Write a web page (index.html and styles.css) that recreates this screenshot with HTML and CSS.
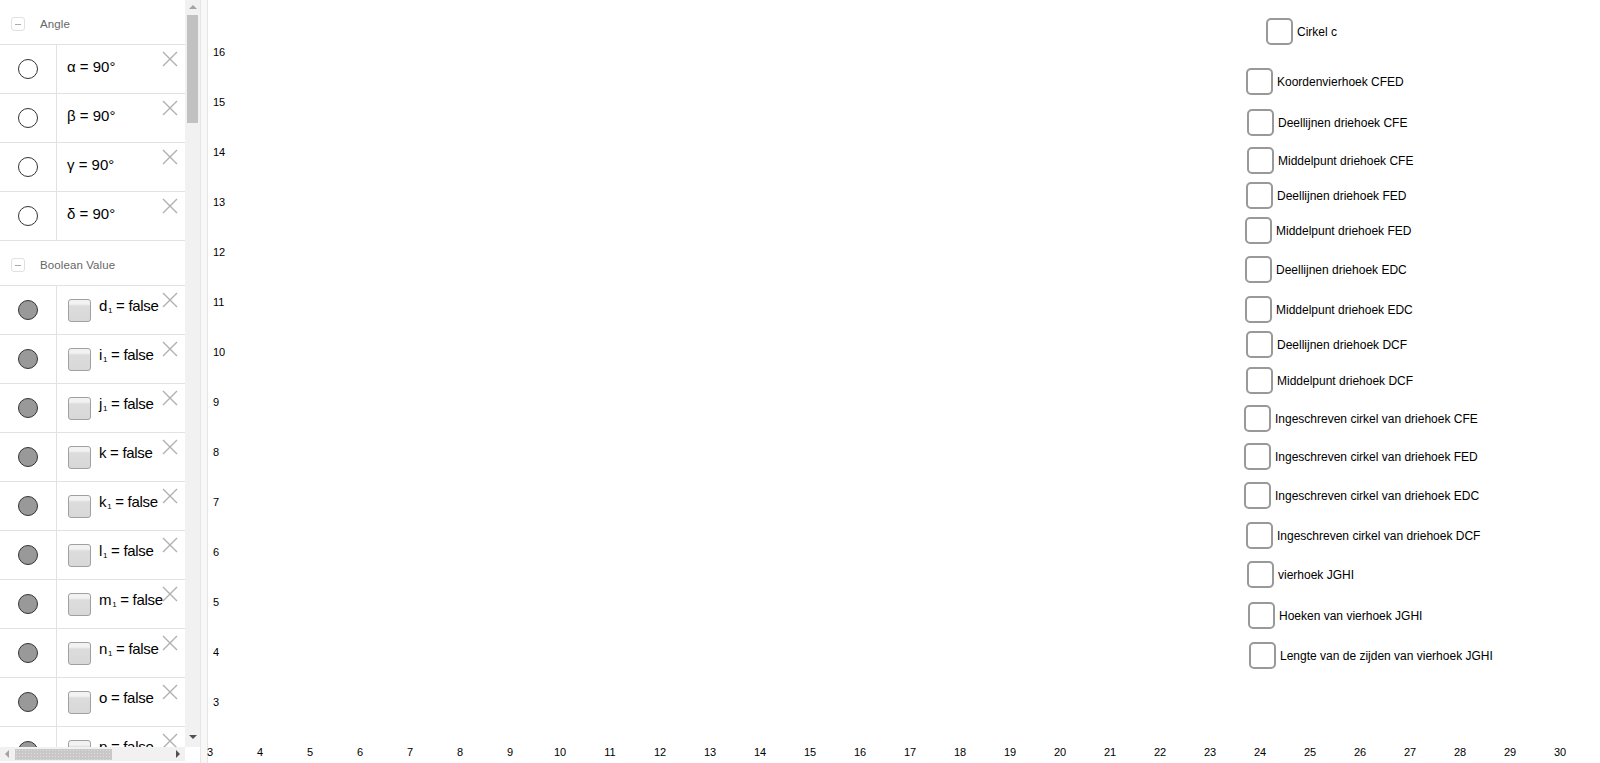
FILE: index.html
```html
<!DOCTYPE html>
<html>
<head>
<meta charset="utf-8">
<link rel="stylesheet" href="styles.css">
</head>
<body>
<div class="app">
  <div class="algebra">
    <div class="algebra-body">
      <div class="list">
        <div class="group-head"><span class="collapse"></span><span class="group-title">Angle</span></div>
        <div class="row"><div class="marker"><span class="dot"></span></div><div class="cell"><span class="expr">α = 90°</span></div><svg class="del" viewBox="0 0 16 16"><path d="M1 1L15 15M15 1L1 15"/></svg></div>
        <div class="row"><div class="marker"><span class="dot"></span></div><div class="cell"><span class="expr">β = 90°</span></div><svg class="del" viewBox="0 0 16 16"><path d="M1 1L15 15M15 1L1 15"/></svg></div>
        <div class="row"><div class="marker"><span class="dot"></span></div><div class="cell"><span class="expr">γ = 90°</span></div><svg class="del" viewBox="0 0 16 16"><path d="M1 1L15 15M15 1L1 15"/></svg></div>
        <div class="row"><div class="marker"><span class="dot"></span></div><div class="cell"><span class="expr">δ = 90°</span></div><svg class="del" viewBox="0 0 16 16"><path d="M1 1L15 15M15 1L1 15"/></svg></div>
        <div class="group-head"><span class="collapse"></span><span class="group-title">Boolean Value</span></div>
        <div class="row"><div class="marker"><span class="dot on"></span></div><div class="cell"><span class="chk"></span><span class="expr bool">d<sub>1</sub> = false</span></div><svg class="del" viewBox="0 0 16 16"><path d="M1 1L15 15M15 1L1 15"/></svg></div>
        <div class="row"><div class="marker"><span class="dot on"></span></div><div class="cell"><span class="chk"></span><span class="expr bool">i<sub>1</sub> = false</span></div><svg class="del" viewBox="0 0 16 16"><path d="M1 1L15 15M15 1L1 15"/></svg></div>
        <div class="row"><div class="marker"><span class="dot on"></span></div><div class="cell"><span class="chk"></span><span class="expr bool">j<sub>1</sub> = false</span></div><svg class="del" viewBox="0 0 16 16"><path d="M1 1L15 15M15 1L1 15"/></svg></div>
        <div class="row"><div class="marker"><span class="dot on"></span></div><div class="cell"><span class="chk"></span><span class="expr bool">k = false</span></div><svg class="del" viewBox="0 0 16 16"><path d="M1 1L15 15M15 1L1 15"/></svg></div>
        <div class="row"><div class="marker"><span class="dot on"></span></div><div class="cell"><span class="chk"></span><span class="expr bool">k<sub>1</sub> = false</span></div><svg class="del" viewBox="0 0 16 16"><path d="M1 1L15 15M15 1L1 15"/></svg></div>
        <div class="row"><div class="marker"><span class="dot on"></span></div><div class="cell"><span class="chk"></span><span class="expr bool">l<sub>1</sub> = false</span></div><svg class="del" viewBox="0 0 16 16"><path d="M1 1L15 15M15 1L1 15"/></svg></div>
        <div class="row"><div class="marker"><span class="dot on"></span></div><div class="cell"><span class="chk"></span><span class="expr bool">m<sub>1</sub> = false</span></div><svg class="del" viewBox="0 0 16 16"><path d="M1 1L15 15M15 1L1 15"/></svg></div>
        <div class="row"><div class="marker"><span class="dot on"></span></div><div class="cell"><span class="chk"></span><span class="expr bool">n<sub>1</sub> = false</span></div><svg class="del" viewBox="0 0 16 16"><path d="M1 1L15 15M15 1L1 15"/></svg></div>
        <div class="row"><div class="marker"><span class="dot on"></span></div><div class="cell"><span class="chk"></span><span class="expr bool">o = false</span></div><svg class="del" viewBox="0 0 16 16"><path d="M1 1L15 15M15 1L1 15"/></svg></div>
        <div class="row"><div class="marker"><span class="dot on"></span></div><div class="cell"><span class="chk"></span><span class="expr bool">p = false</span></div><svg class="del" viewBox="0 0 16 16"><path d="M1 1L15 15M15 1L1 15"/></svg></div>
      </div>
      <div class="vscroll">
        <span class="arrow up"></span>
        <span class="vthumb"></span>
        <span class="vspace"></span>
        <span class="arrow down"></span>
      </div>
    </div>
    <div class="hbar">
      <div class="hscroll">
        <span class="arrow left"></span>
        <span class="hthumb"></span>
        <span class="hspace"></span>
        <span class="arrow right"></span>
      </div>
      <div class="corner"></div>
    </div>
  </div>
  <div class="divider"></div>
  <div class="graphics">
    <div class="yaxis">
      <span>16</span><span>15</span><span>14</span><span>13</span><span>12</span><span>11</span><span>10</span><span>9</span><span>8</span><span>7</span><span>6</span><span>5</span><span>4</span><span>3</span>
    </div>
    <div class="xaxis">
      <span>3</span><span>4</span><span>5</span><span>6</span><span>7</span><span>8</span><span>9</span><span>10</span><span>11</span><span>12</span><span>13</span><span>14</span><span>15</span><span>16</span><span>17</span><span>18</span><span>19</span><span>20</span><span>21</span><span>22</span><span>23</span><span>24</span><span>25</span><span>26</span><span>27</span><span>28</span><span>29</span><span>30</span>
    </div>
    <label class="gcb" style="left:1058px;top:18px"><span class="gbox"></span><span class="gtext">Cirkel c</span></label>
    <label class="gcb" style="left:1038px;top:68px"><span class="gbox"></span><span class="gtext">Koordenvierhoek CFED</span></label>
    <label class="gcb" style="left:1039px;top:109px"><span class="gbox"></span><span class="gtext">Deellijnen driehoek CFE</span></label>
    <label class="gcb" style="left:1039px;top:147px"><span class="gbox"></span><span class="gtext">Middelpunt driehoek CFE</span></label>
    <label class="gcb" style="left:1038px;top:182px"><span class="gbox"></span><span class="gtext">Deellijnen driehoek FED</span></label>
    <label class="gcb" style="left:1037px;top:217px"><span class="gbox"></span><span class="gtext">Middelpunt driehoek FED</span></label>
    <label class="gcb" style="left:1037px;top:256px"><span class="gbox"></span><span class="gtext">Deellijnen driehoek EDC</span></label>
    <label class="gcb" style="left:1037px;top:296px"><span class="gbox"></span><span class="gtext">Middelpunt driehoek EDC</span></label>
    <label class="gcb" style="left:1038px;top:331px"><span class="gbox"></span><span class="gtext">Deellijnen driehoek DCF</span></label>
    <label class="gcb" style="left:1038px;top:367px"><span class="gbox"></span><span class="gtext">Middelpunt driehoek DCF</span></label>
    <label class="gcb" style="left:1036px;top:405px"><span class="gbox"></span><span class="gtext">Ingeschreven cirkel van driehoek CFE</span></label>
    <label class="gcb" style="left:1036px;top:443px"><span class="gbox"></span><span class="gtext">Ingeschreven cirkel van driehoek FED</span></label>
    <label class="gcb" style="left:1036px;top:482px"><span class="gbox"></span><span class="gtext">Ingeschreven cirkel van driehoek EDC</span></label>
    <label class="gcb" style="left:1038px;top:522px"><span class="gbox"></span><span class="gtext">Ingeschreven cirkel van driehoek DCF</span></label>
    <label class="gcb" style="left:1039px;top:561px"><span class="gbox"></span><span class="gtext">vierhoek JGHI</span></label>
    <label class="gcb" style="left:1040px;top:602px"><span class="gbox"></span><span class="gtext">Hoeken van vierhoek JGHI</span></label>
    <label class="gcb" style="left:1041px;top:642px"><span class="gbox"></span><span class="gtext">Lengte van de zijden van vierhoek JGHI</span></label>
  </div>
</div>
</body>
</html>
```
FILE: styles.css
```css
html, body {
  margin: 0;
  padding: 0;
  background: #fff;
}
body {
  width: 1600px;
  height: 763px;
  overflow: hidden;
  font-family: "Liberation Sans", Arial, sans-serif;
}
.app {
  display: flex;
  height: 763px;
}
.algebra {
  width: 200px;
  flex: none;
  display: flex;
  flex-direction: column;
}
.algebra-body {
  display: flex;
  height: 747px;
}
.list {
  width: 185px;
  overflow: hidden;
  flex: none;
}
.group-head {
  height: 45px;
  box-sizing: border-box;
  border-bottom: 1px solid #e2e2e2;
  display: flex;
  align-items: center;
  padding-left: 11px;
  padding-top: 4px;
}
.collapse {
  width: 14px;
  height: 14px;
  box-sizing: border-box;
  border: 1px solid #e0e0e0;
  border-radius: 3px;
  position: relative;
  margin-right: 15px;
}
.collapse::after {
  content: "";
  position: absolute;
  left: 3px;
  right: 3px;
  top: 6px;
  height: 1px;
  background: #aaa;
}
.group-title {
  font-size: 11.5px;
  color: #666;
  letter-spacing: 0.1px;
}
.row {
  height: 49px;
  box-sizing: border-box;
  border-bottom: 1px solid #e2e2e2;
  display: flex;
  position: relative;
}
.marker {
  width: 57px;
  flex: none;
  box-sizing: border-box;
  border-right: 1px solid #e2e2e2;
  display: flex;
  align-items: center;
  justify-content: center;
}
.dot {
  width: 20px;
  height: 20px;
  box-sizing: border-box;
  border-radius: 50%;
  border: 1px solid #333;
  background: #fff;
  margin-left: -1px;
}
.dot.on {
  background: #999;
}
.cell {
  display: flex;
  align-items: center;
  padding-left: 10px;
  white-space: nowrap;
}
.chk {
  width: 23px;
  height: 23px;
  box-sizing: border-box;
  border: 1px solid #a0a0a0;
  border-radius: 3px;
  background: linear-gradient(#f2f2f2 0, #f2f2f2 4px, #dcdcdc 6px, #d8d8d8 100%);
  margin-left: 1px;
  margin-right: 8px;
  margin-top: 1px;
}
.expr {
  font-size: 15px;
  color: #000;
  margin-bottom: 6px;
}
.expr.bool {
  margin-bottom: 10px;
  letter-spacing: -0.3px;
}
.expr sub {
  font-size: 8px;
  vertical-align: -2px;
  line-height: 0;
  margin-left: 1px;
}
.del {
  position: absolute;
  left: 162px;
  top: 6px;
  width: 16px;
  height: 16px;
  fill: none;
  stroke: #b0b0b0;
  stroke-width: 1.4;
}
.vscroll {
  width: 15px;
  flex: none;
  background: #f1f1f1;
  display: flex;
  flex-direction: column;
  align-items: center;
}
.arrow {
  width: 0;
  height: 0;
  flex: none;
}
.arrow.up {
  margin-top: 5px;
  border-left: 4px solid transparent;
  border-right: 4px solid transparent;
  border-bottom: 4px solid #a3a3a3;
}
.vthumb {
  margin-top: 6px;
  width: 11px;
  height: 108px;
  background: #c1c1c1;
  flex: none;
}
.vspace {
  flex: 1;
}
.arrow.down {
  margin-bottom: 8px;
  border-left: 4px solid transparent;
  border-right: 4px solid transparent;
  border-top: 4px solid #505050;
}
.hbar {
  display: flex;
  height: 14px;
}
.hscroll {
  width: 185px;
  background: #f1f1f1;
  display: flex;
  align-items: center;
}
.arrow.left {
  margin-left: 5px;
  border-top: 4px solid transparent;
  border-bottom: 4px solid transparent;
  border-right: 4px solid #a3a3a3;
}
.hthumb {
  margin-left: 6px;
  width: 97px;
  height: 11px;
  background-color: #c8c8c8;
  background-image: radial-gradient(circle, #dedede 0.6px, transparent 0.8px);
  background-size: 3px 3px;
}
.hspace {
  flex: 1;
}
.arrow.right {
  margin-right: 5px;
  border-top: 4px solid transparent;
  border-bottom: 4px solid transparent;
  border-left: 4px solid #505050;
}
.corner {
  width: 15px;
  background: #fff;
}
.divider {
  width: 8px;
  flex: none;
  box-sizing: border-box;
  background: #f8f8f8;
  border-left: 1px solid #e6e6e6;
  border-right: 1px solid #e6e6e6;
}
.graphics {
  flex: 1;
  position: relative;
  background: #fff;
}
.yaxis {
  position: absolute;
  left: 5px;
  top: 27px;
  display: flex;
  flex-direction: column;
}
.yaxis span {
  height: 50px;
  line-height: 50px;
  font-size: 11px;
  color: #000;
  display: block;
}
.xaxis {
  position: absolute;
  left: -23px;
  top: 742px;
  display: flex;
}
.xaxis span {
  width: 50px;
  height: 20px;
  line-height: 20px;
  text-align: center;
  font-size: 11px;
  color: #000;
  display: block;
}
.gcb {
  position: absolute;
  display: flex;
  align-items: center;
  white-space: nowrap;
}
.gbox {
  width: 27px;
  height: 27px;
  box-sizing: border-box;
  border: 2px solid #999;
  border-radius: 5px;
  background: #fff;
  margin-right: 4px;
}
.gtext {
  font-size: 12px;
  color: #000;
}
```
